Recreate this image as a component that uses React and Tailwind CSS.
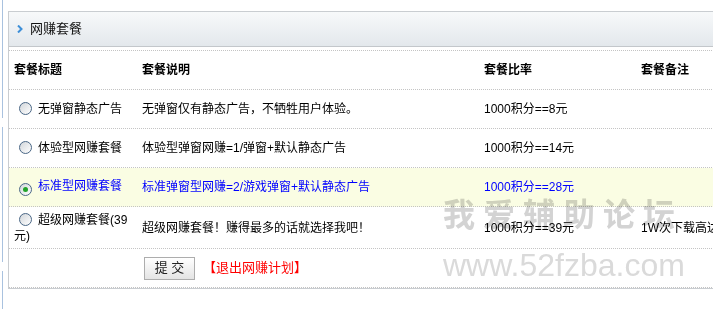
import React from "react";

const plans = [
  {
    title: "无弹窗静态广告",
    desc: "无弹窗仅有静态广告，不牺牲用户体验。",
    rate: "1000积分==8元",
    note: "",
  },
  {
    title: "体验型网赚套餐",
    desc: "体验型弹窗网赚=1/弹窗+默认静态广告",
    rate: "1000积分==14元",
    note: "",
  },
  {
    title: "标准型网赚套餐",
    desc: "标准弹窗型网赚=2/游戏弹窗+默认静态广告",
    rate: "1000积分==28元",
    note: "",
    checked: true,
  },
  {
    title: "超级网赚套餐(39元)",
    desc: "超级网赚套餐！赚得最多的话就选择我吧！",
    rate: "1000积分==39元",
    note: "1W次下载高达40元",
    tall: true,
  },
];

function Radio({ checked }) {
  return (
    <span className="inline-flex items-center justify-center w-[13px] h-[13px] rounded-full border border-[#4a6786] bg-gradient-to-br from-[#d2d6da] to-white align-[-2px] ml-[5px] mr-[6px]">
      {checked && <span className="w-[5px] h-[5px] rounded-full bg-[#22a32a]" />}
    </span>
  );
}

function App() {
  const font = { fontFamily: '"Liberation Sans", "Noto Sans CJK SC", sans-serif' };

  return (
    <div className="relative w-[713px] h-[309px] overflow-hidden bg-white flex text-[12px] text-black" style={font}>
      {/* sidebar boxes peeking in on the left */}
      <div className="w-[3px] shrink-0 flex flex-col">
        <div className="h-[123px] border-r border-[#a9c2df]" />
        <div className="h-[141px] mt-[9px] border-r border-[#a9c2df]" />
        <div className="h-[40px] mt-[9px] border-r border-[#a9c2df]" />
      </div>

      <div className="ml-[5px] mt-[11px] w-[780px] shrink-0 self-start border-t border-l border-b border-[#c9cdd1]">
        {/* panel header */}
        <div className="h-[35px] flex items-center bg-gradient-to-b from-[#f7f9fa] to-[#e3e8ec] border-b border-[#c3c7cb]">
          <svg width="6" height="8" viewBox="0 0 6 8" className="ml-[8px]">
            <path d="M1 0.5 L4.5 4 L1 7.5" stroke="#3d8fd8" strokeWidth="2" fill="none" />
          </svg>
          <span className="ml-[7px] text-[13px] text-[#111]">网赚套餐</span>
        </div>

        <div className="mt-[3px] border-t border-dotted border-[#c4c4c4]">
          {/* column heads */}
          <div className="flex items-center h-[39px] border-b border-dotted border-[#c4c4c4] font-bold">
            <div className="w-[128px] pl-[5px]">套餐标题</div>
            <div className="w-[342px] pl-[5px]">套餐说明</div>
            <div className="w-[157px] pl-[5px]">套餐比率</div>
            <div className="flex-1 pl-[5px]">套餐备注</div>
          </div>

          {plans.map((p) => (
            <div
              key={p.title}
              className={
                "flex items-center border-b border-dotted border-[#c4c4c4] " +
                (p.tall ? "h-[42px] " : "h-[39px] ") +
                (p.checked ? "bg-[#fafde3] text-[#0000ff]" : "")
              }
            >
              <div className="w-[128px] pl-[5px] pr-[4px] leading-[16px]">
                <Radio checked={p.checked} />
                {p.title}
              </div>
              <div className="w-[342px] pl-[5px] whitespace-nowrap">{p.desc}</div>
              <div className="w-[157px] pl-[5px] whitespace-nowrap">{p.rate}</div>
              <div className="flex-1 pl-[5px] whitespace-nowrap">{p.note}</div>
            </div>
          ))}

          {/* submit row */}
          <div className="flex items-center h-[39px] border-b border-dotted border-[#c4c4c4]">
            <div className="w-[128px]" />
            <div className="flex items-center pl-[7px]">
              <button className="w-[51px] h-[23px] border border-[#adadad] bg-gradient-to-b from-white to-[#e4e4e4] text-[13px] text-[#222]">
                提 交
              </button>
              <span className="ml-[8px] text-[13px] text-[#ff0000]">【退出网赚计划】</span>
            </div>
          </div>
        </div>
      </div>

      {/* site watermark, multiplied over the page so dark text stays on top */}
      <div className="absolute left-[443px] top-[196px] pointer-events-none select-none text-[#d3d3d3] mix-blend-multiply">
        <div className="text-[32px] font-bold leading-none tracking-[8px] whitespace-nowrap" style={{ fontFamily: '"Noto Sans CJK SC", sans-serif' }}>
          我爱辅助论坛
        </div>
        <div className="mt-[21px] text-[32px] leading-none whitespace-nowrap text-[#dadada]" style={{ fontFamily: '"Liberation Sans", sans-serif' }}>
          www.52fzba.com
        </div>
      </div>
    </div>
  );
}

export default App;
